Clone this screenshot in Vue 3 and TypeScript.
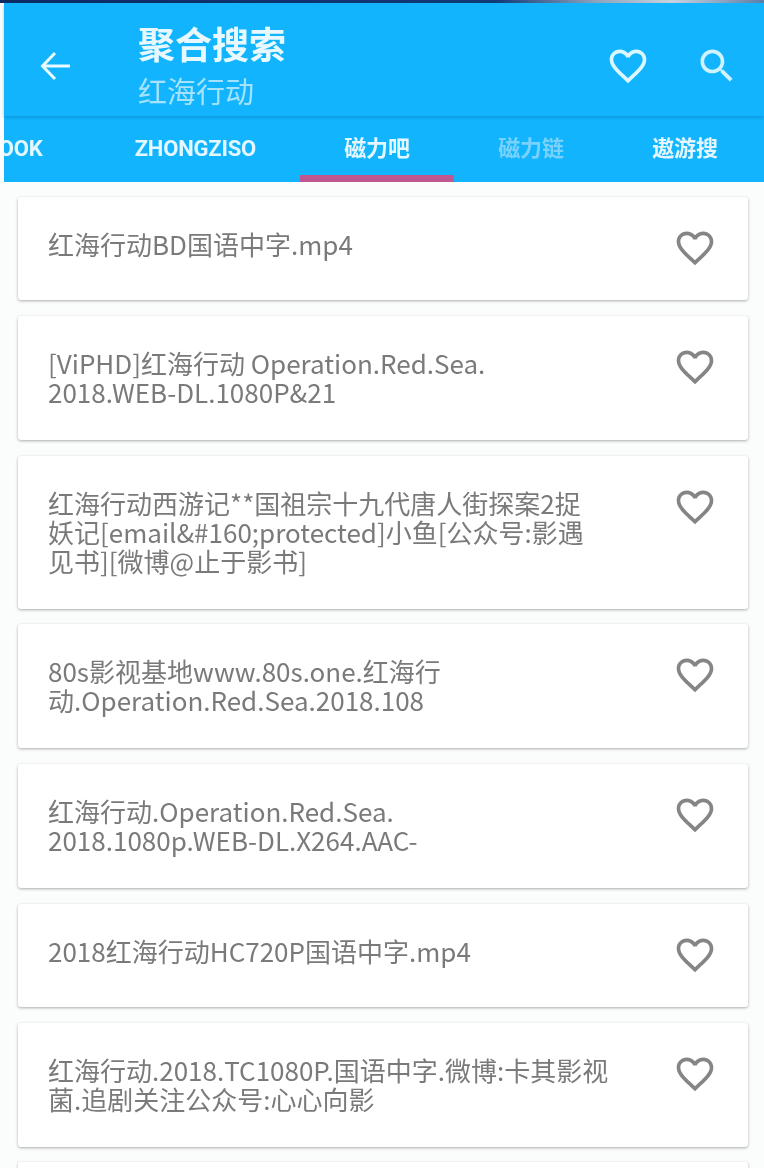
<script setup lang="ts">
const tabs = [
  { label: 'BOOK' },
  { label: 'ZHONGZISO' },
  { label: '磁力吧', active: true },
  { label: '磁力链', muted: true },
  { label: '遨游搜' },
]

const results: string[][] = [
  ['红海行动BD国语中字.mp4'],
  ['[ViPHD]红海行动 Operation.Red.Sea.', '2018.WEB-DL.1080P&21'],
  ['红海行动西游记**国祖宗十九代唐人街探案2捉', '妖记[email&#160;protected]小鱼[公众号:影遇', '见书][微博@止于影书]'],
  ['80s影视基地www.80s.one.红海行', '动.Operation.Red.Sea.2018.108'],
  ['红海行动.Operation.Red.Sea.', '2018.1080p.WEB-DL.X264.AAC-'],
  ['2018红海行动HC720P国语中字.mp4'],
  ['红海行动.2018.TC1080P.国语中字.微博:卡其影视', '菌.追剧关注公众号:心心向影'],
  [''],
]

const heartPath =
  'M16.5 3c-1.74 0-3.41.81-4.5 2.09C10.91 3.81 9.24 3 7.5 3 4.42 3 2 5.42 2 8.5c0 3.78 3.4 6.86 8.55 11.54L12 21.35l1.45-1.32C18.6 15.36 22 12.28 22 8.5 22 5.42 19.58 3 16.5 3zm-4.4 15.55l-.1.1-.1-.1C7.14 14.24 4 11.39 4 8.5 4 6.5 5.5 5 7.5 5c1.54 0 3.04.99 3.57 2.36h1.87C13.46 5.99 14.96 5 16.5 5c2 0 3.5 1.5 3.5 3.5 0 2.89-3.14 5.74-7.9 10.05z'
</script>

<template>
  <div class="screen">
    <div class="status"></div>

    <div class="appbar">
      <header class="toolbar">
        <svg class="back" viewBox="0 0 32 30" fill="none">
          <path d="M30 15H3M15 2 2.5 15 15 28" />
        </svg>
        <div class="titles">
          <div class="title">聚合搜索</div>
          <div class="subtitle">红海行动</div>
        </div>
        <svg class="fav" viewBox="0 0 24 24"><path :d="heartPath" /></svg>
        <svg class="search" viewBox="0 0 24 24">
          <path
            d="M15.5 14h-.79l-.28-.27C15.41 12.59 16 11.11 16 9.5 16 5.91 13.09 3 9.5 3S3 5.91 3 9.5 5.91 16 9.5 16c1.61 0 3.09-.59 4.23-1.57l.27.28v.79l5 4.99L20.49 19l-4.99-5zm-6 0C7.01 14 5 11.99 5 9.5S7.01 5 9.5 5 14 7.01 14 9.5 11.99 14 9.5 14z"
          />
        </svg>
      </header>

      <nav class="tabs">
        <div
          v-for="tab in tabs"
          :key="tab.label"
          class="tab"
          :class="{ active: tab.active, muted: tab.muted }"
        >
          {{ tab.label }}
        </div>
      </nav>
    </div>

    <main class="list">
      <section v-for="(lines, i) in results" :key="i" class="card">
        <div class="name">
          <div v-for="line in lines" :key="line">{{ line }}</div>
        </div>
        <svg class="heart" viewBox="0 0 24 24"><path :d="heartPath" /></svg>
      </section>
    </main>
  </div>
</template>

<style scoped>
.screen {
  width: 764px;
  height: 1168px;
  overflow: hidden;
  background: #fbfcfc;
  font-family: Roboto, "Noto Sans CJK SC", sans-serif;
  filter: blur(0.5px);
}

.status {
  height: 3px;
  background: linear-gradient(90deg, #0e2a63 0%, #123a78 65%, #8ea4bd 78%, #c9d3de 88%, #5c7fa8 100%);
}

.appbar {
  margin-left: 4px;
  background: #12b5fd;
}

.toolbar {
  display: flex;
  align-items: center;
  height: 113px;
  box-sizing: border-box;
  padding: 12px 25px 0 36px;
  box-shadow: 0 2px 3px rgba(6, 110, 170, 0.35);
  color: #fff;
}

.back {
  width: 32px;
  height: 30px;
  stroke: #eafaff;
  stroke-width: 3;
}

.titles {
  flex: 1;
  margin-left: 66px;
  margin-top: 4px;
}

.title {
  font-size: 37px;
  line-height: 44px;
  font-weight: 700;
  color: #e8f8ff;
}

.subtitle {
  margin-top: 6px;
  font-size: 29px;
  line-height: 36px;
  color: #a5e2fc;
}

.fav {
  width: 44px;
  height: 44px;
  fill: #dcf7ff;
}

.search {
  width: 44px;
  height: 44px;
  margin-left: 45px;
  fill: #d0f2ff;
}

.tabs {
  display: flex;
  justify-content: flex-end;
  height: 66px;
  overflow: hidden;
  padding-right: 2px;
}

.tab {
  flex: none;
  min-width: 154px;
  padding: 0 44px;
  box-sizing: border-box;
  text-align: center;
  font-size: 22px;
  font-weight: 700;
  letter-spacing: -0.2px;
  line-height: 66px;
  color: #e4f6ff;
}

.tab.muted {
  color: #79d2fb;
}

.tab.active {
  box-shadow: inset 0 -7px 0 #bf5790;
}

.list {
  display: flex;
  flex-direction: column;
  gap: 15.75px;
  padding: 15px 16px 0 18px;
}

.card {
  flex: none;
  display: flex;
  align-items: flex-start;
  justify-content: space-between;
  min-height: 103px;
  box-sizing: border-box;
  padding: 32px 31px 34px 30px;
  background: #fff;
  border-radius: 3px;
  box-shadow: 0 1px 3px rgba(0, 0, 0, 0.32);
}

.name {
  font-family: "Noto Sans CJK SC", "Noto Sans", sans-serif;
  font-size: 26px;
  line-height: 29px;
  color: #7a7a7a;
  white-space: nowrap;
}

.heart {
  flex: none;
  width: 44px;
  height: 44px;
  margin-top: -3px;
  margin-bottom: -20px;
  fill: #858585;
}
</style>
